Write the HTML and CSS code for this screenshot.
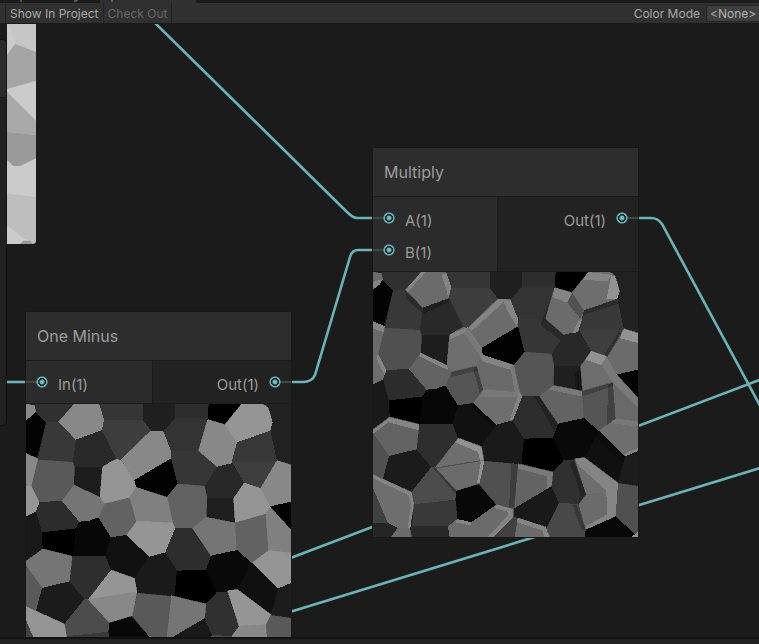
FILE: index.html
```html
<!DOCTYPE html>
<html lang="en">
<head>
<meta charset="utf-8">
<title>Shader Graph</title>
<link rel="stylesheet" href="styles.css">
</head>
<body>
<div class="tabs" aria-hidden="true">
  <span class="tab"><svg class="marks" viewBox="0 0 100 3"><path d="M21 0V2M74 1H77V0"/></svg></span>
  <span class="tab tab-active"><svg class="marks" viewBox="0 0 100 3"><path d="M12 0V2"/></svg></span>
</div>
<header class="toolbar">
  <button class="tool" type="button">Show In Project</button>
  <button class="tool" type="button" disabled>Check Out</button>
  <label class="mode-label" for="mode">Color Mode</label>
  <select class="mode" id="mode"><option>&lt;None&gt;</option></select>
</header>
<main class="canvas">
  <svg class="wires" aria-hidden="true">
    <g transform="translate(0 -24)">
      <path d="M152 20 347 212Q353 218 357 218H373"/>
      <path d="M291 382H303Q312 382 315 375L350 257Q352 250 358 250H373"/>
      <path d="M637 218H651Q658 218 662 224L764 413"/>
      <path d="M6 382H27"/>
      <path d="M280 562 770 376"/>
      <path d="M280 615 770 465"/>
    </g>
  </svg>

  <svg class="fragment" viewBox="21 12 87 660" aria-hidden="true">
    <path fill="#cbcbcb" d="M21 12H108V672H21Z"/>
    <path fill="#c6c6c6" d="M28 12H108V95L45 72Z"/>
    <path fill="#a5a5a5" d="M45 72 108 95V182L21 207V105Z"/>
    <path fill="#a9a9a9" d="M21 215 108 302V345L21 335Z"/>
    <path fill="#9a9a9a" d="M21 335 108 345V415L60 438 40 438 21 420Z"/>
    <path fill="#bebebe" d="M21 520 108 532V672L70 655 21 615Z"/>
    <path fill="#999" d="M60 672 70 662H90L100 672Z"/>
  </svg>
  <aside class="panel"><div class="panel-head"></div></aside>

  <section class="node one-minus">
    <h2 class="title">One Minus</h2>
    <div class="ports">
      <div class="inputs"><div class="port"><i class="pin"></i><span>In(1)</span></div></div>
      <div class="outputs"><div class="port"><span>Out(1)</span><i class="pin"></i></div></div>
    </div>
    <svg class="preview" viewBox="0 0 795 795" role="img" aria-label="Preview"><use href="#cells"/></svg>
  </section>

  <section class="node multiply">
    <h2 class="title">Multiply</h2>
    <div class="ports">
      <div class="inputs">
        <div class="port"><i class="pin"></i><span>A(1)</span></div>
        <div class="port"><i class="pin"></i><span>B(1)</span></div>
      </div>
      <div class="outputs"><div class="port"><span>Out(1)</span><i class="pin"></i></div></div>
    </div>
    <svg class="preview" viewBox="0 0 795 795" role="img" aria-label="Preview">
      <defs>
        <g id="cells">
          <path fill="#1e1e1e" d="M0 0H795V795H0Z"/>
          <path class="b" d="M0 0 26 5 29 25 3 50 0 50Z"/>
          <path fill="#303030" d="M28 0 145 0 98 53 60 55 29 26Z"/>
          <path fill="#383838" d="M60 55 98 53 150 107 140 175 35 168Z"/>
          <path fill="#030303" d="M29 25 60 55 33 160 0 150 0 50Z"/>
          <path class="b" d="M145 0 220 0 234 45 228 78 150 107 98 53Z"/>
          <path fill="#353535" d="M220 0H350V48H234Z"/>
          <path fill="#3d3d3d" d="M234 47H350L375 80 285 170 272 167 228 78Z"/>
          <path fill="#292929" d="M228 78 272 165 230 190 145 190 140 175 150 107Z"/>
          <path fill="#1d1d1d" d="M145 189H230L222 280 143 243Z"/>
          <path class="a" d="M230 188 272 165 285 170 325 228 330 250 310 282 235 300 222 280Z"/>
          <path class="b" d="M285 167 375 80 412 82 435 135 435 163 325 228Z"/>
          <path fill="#020202" d="M325 228 435 163 455 240 423 280 400 275 330 250Z"/>
          <path fill="#1f1f1f" d="M350 0H448V43L412 82 375 80 350 47Z"/>
          <path fill="#2d2d2d" d="M448 0H548L545 43H448Z"/>
          <path fill="#333" d="M448 43H545L518 141H435L412 82Z"/>
          <path fill="#363636" d="M435 140H518L573 188 535 248 455 240 435 163Z"/>
          <path fill="#000" d="M548 0H647L597 62 545 47Z"/>
          <path class="b" d="M545 47 597 62 633 115 617 178 573 188 518 140Z"/>
          <path class="a" d="M647 0H710L725 10 740 55 733 80 633 115 597 62Z"/>
          <path fill="#212121" d="M725 0H795V185L750 168 733 80 740 55Z"/>
          <path fill="#383838" d="M633 115 733 80 753 173H617Z"/>
          <path fill="#3e3e3e" d="M617 173H753L703 257 655 237Z"/>
          <path class="b" d="M753 170 795 183V295L733 309 703 255Z"/>
          <path fill="#282828" d="M573 188 617 178 655 237 623 284H543L535 247Z"/>
          <path fill="#1f1f1f" d="M543 283H623L628 357 540 340Z"/>
          <path class="a" d="M655 237 703 253 733 310 720 330 628 357 623 283Z"/>
          <path fill="#020202" d="M733 307 795 293V378Z"/>
          <path class="d" d="M455 240 535 247 543 283 540 340 500 373H447L435 345 423 280Z"/>
          <path class="c2" d="M310 282 330 250 423 280 440 357 330 354Z"/>
          <path class="a" d="M330 352 440 357 447 373 418 445 370 458 300 393Z"/>
          <path class="d" d="M235 300 310 282 330 353 300 393 255 400 217 340Z"/>
          <path class="c" d="M143 243 222 280 235 300 217 340 190 350 160 353 107 290Z"/>
          <path class="e" d="M35 168 140 175 145 190 143 243 107 290 40 295 15 247Z"/>
          <path class="b" d="M0 148 35 165 15 247H0Z"/>
          <path class="a" d="M0 247H15L40 295 30 323 0 337Z"/>
          <path fill="#191919" d="M0 337 30 323 48 383V436L0 480Z"/>
          <path fill="#2c2c2c" d="M40 295 107 290 160 353 150 375 48 385 30 323Z"/>
          <path fill="#000" d="M48 385 150 373 140 457 50 435Z"/>
          <path fill="#070707" d="M160 353 190 350 217 340 255 400 238 457H140L150 373Z"/>
          <path fill="#111" d="M255 400 300 393 370 458 325 523 255 498 238 457Z"/>
          <path fill="#1a1a1a" d="M370 458 418 445 453 500 445 578 335 568 325 523Z"/>
          <path fill="#2d2d2d" d="M447 373H500L555 455 540 497 453 500 418 445Z"/>
          <path class="c" d="M540 340 628 357 633 438 555 455 500 373Z"/>
          <path class="d" d="M628 357 720 330 728 440 678 477 633 438Z"/>
          <path class="c2" d="M720 330 733 310 795 378V448L728 440Z"/>
          <path class="a" d="M678 477 728 440 795 447V537L757 553Z"/>
          <path fill="#090909" d="M555 455 633 438 678 477 635 557 605 565H572L540 497Z"/>
          <path fill="#101010" d="M678 477 757 553 735 632 635 557Z"/>
          <path fill="#1c1c1c" d="M757 553 795 537V643L735 634Z"/>
          <path fill="#000" d="M453 500 540 497 572 565 540 602 445 577Z"/>
          <path fill="#303030" d="M572 565H605L640 668 617 698 558 695 535 643 540 600Z"/>
          <path class="a" d="M605 560 635 557 735 632 720 664 640 668Z"/>
          <path class="b" d="M640 667 720 662 728 733 638 773 615 700Z"/>
          <path class="e" d="M735 634 795 643V795L728 733 720 662Z"/>
          <path fill="#080808" d="M728 733 795 795H635L638 773Z"/>
          <path class="c" d="M435 575 540 600 535 643 420 711Z"/>
          <path class="e" d="M335 568 435 577 420 713 370 698 318 635Z"/>
          <path fill="#191919" d="M535 643 558 693 520 768 435 738 420 711Z"/>
          <path fill="#484848" d="M558 693 617 696 638 773 635 795H530L520 768Z"/>
          <path class="b" d="M435 738 518 765 530 795H425Z"/>
          <path class="b" d="M370 698 420 711V735L360 795H310L295 751Z"/>
          <path fill="#414141" d="M420 733 435 738 425 795H360Z"/>
          <path class="b" d="M253 741 295 751 310 795H230L225 763Z"/>
          <path fill="#080808" d="M248 658 315 636 370 698 295 751 253 741Z"/>
          <path fill="#393939" d="M120 695 247 683 253 741 225 763H118Z"/>
          <path fill="#282828" d="M112 763H225L230 795H115Z"/>
          <path fill="#4c4c4c" d="M175 585H187L250 655 247 683 120 697 115 660Z"/>
          <path class="a" d="M255 498 325 523 333 565 187 587Z"/>
          <path class="b" d="M187 587 333 563 318 635 250 655Z"/>
          <path fill="#2e2e2e" d="M140 455H238L255 498 187 585H175L130 532Z"/>
          <path class="c" d="M50 435 138 457 130 532 48 552 0 490V472Z"/>
          <path class="e" d="M0 485 48 552 30 622 0 610Z"/>
          <path fill="#1b1b1b" d="M48 552 130 532 175 585 115 660 30 620Z"/>
          <path class="a" d="M0 608 115 660 122 700 110 768H75L45 753 0 648Z"/>
          <path fill="#414141" d="M0 648 45 753H0Z"/>
          <path fill="#252525" d="M0 753H45L75 768 55 795H0Z"/>
          <path class="b" d="M75 768H110L115 795H55Z"/>
        </g>
      </defs>
      <use href="#cells"/>
      <g class="lit">
        <path d="M0 30 29 22 20 38 3 50 0 50Z"/>
        <path d="M98 53 145 0 158 0 104 60Z"/>
        <path d="M205 8 222 6 235 48 225 78 222 58Z"/>
        <path d="M0 148 35 162 33 180 0 170Z"/>
        <path d="M15 247 40 295 35 310 10 258Z"/>
        <path d="M143 243 222 280 226 295 137 252Z"/>
        <path d="M230 188 285 165 282 180 230 202Z"/>
        <path class="soft" d="M285 167 328 230 322 252 272 182Z"/>
        <path d="M375 82 400 82 388 94 295 178 287 168Z"/>
        <path d="M390 82 412 84 435 140 432 165 400 110Z"/>
        <path d="M320 245 423 280 425 297 328 268Z"/>
        <path class="soft" d="M423 280 438 363 426 363 412 285Z"/>
        <path class="soft" d="M330 353 440 361 440 375 322 374Z"/>
        <path d="M438 361 448 373 420 444 410 444 434 376Z"/>
        <path d="M545 47 597 62 583 92 538 75Z"/>
        <path d="M618 145 628 140 615 180 598 184Z"/>
        <path d="M645 0 715 8 703 28 630 23Z"/>
        <path class="bright" d="M715 10 726 13 740 58 733 80 700 82Z"/>
        <path class="bright" d="M753 171 795 184V213L740 198Z"/>
        <path class="bright" d="M654 238 703 253 690 280 638 263Z"/>
        <path class="soft" d="M700 254 733 311 720 331 685 278Z"/>
        <path class="soft" d="M540 341 628 358V374L528 353Z"/>
        <path class="soft" d="M720 332 733 312 795 378V405Z"/>
        <path class="soft" d="M728 440 795 449V464L712 453Z"/>
        <path d="M755 553 795 537V528L757 543Z"/>
        <path d="M50 436 139 458 137 475 46 451 0 485V475Z"/>
        <path class="bright" d="M255 498 325 525 333 573 320 633H312L323 573 315 540 249 512Z"/>
        <path d="M0 608 115 661 122 693 112 768H104L115 693 107 670 0 618Z"/>
        <path d="M253 741 295 751V761L247 751Z"/>
        <path d="M370 698 420 711V735L360 795H345L405 730 404 719 364 708Z"/>
        <path d="M607 561 635 558 735 634 728 733 638 773V763L702 728 700 655 615 580Z"/>
        <path class="soft" d="M437 577 540 601 535 643 520 650 523 613 435 590Z"/>
        <path d="M435 738 518 765 530 795H515L508 775 430 750Z"/>
        <path class="bright" d="M775 795 795 780V795Z"/>
      </g>
      <g class="shade">
        <path d="M98 60 150 108 228 80 226 92 150 125 98 80Z"/>
        <path d="M235 300 310 283 316 296 235 315Z"/>
        <path d="M310 283 330 352 320 364 302 295Z"/>
        <path d="M597 62 633 115 622 140 583 92Z"/>
        <path d="M525 95 518 142 572 190 565 206 502 160Z"/>
        <path d="M633 115 733 82 736 95 629 130Z"/>
        <path d="M745 190 703 255 693 251 740 175Z"/>
        <path d="M605 308 623 286 630 358 608 353Z"/>
        <path d="M628 358 720 332V343L628 373Z"/>
        <path d="M705 338 720 332 728 440 702 460Z"/>
        <path d="M500 373 555 455 545 480 484 373Z"/>
        <path d="M633 438 757 553 750 575 630 455Z"/>
        <path d="M300 393 370 458 362 470 285 395Z"/>
        <path d="M602 567 640 668 615 698 622 665 590 570Z"/>
        <path d="M415 576 435 577 425 705 408 709Z"/>
        <path d="M187 587 332 563V566L190 590Z"/>
        <path d="M187 587 250 655 247 666 182 590Z"/>
        <path d="M612 700 638 773 627 775 598 698Z"/>
      </g>
    </svg>
  </section>
</main>
<footer class="status"></footer>
</body>
</html>
```
FILE: styles.css
```css
* { box-sizing: border-box; }

body {
  margin: 0;
  height: 100vh;
  display: flex;
  flex-direction: column;
  overflow: hidden;
  background: #1b1b1b;
  color: #9c9c9c;
  font-family: Inter, "Liberation Sans", sans-serif;
}

.tabs {
  flex: none;
  display: flex;
  height: 3px;
  background: #1c1c1c;
}
.tab { width: 100px; }
.tab-active { width: 96px; background: #303030; }
.marks {
  display: block;
  width: 100px;
  height: 3px;
  fill: none;
  stroke: #8a8a8a;
}

.toolbar {
  flex: none;
  display: flex;
  align-items: stretch;
  height: 21px;
  padding-left: 5px;
  background: #303030;
  border-bottom: 1px solid #191919;
  font-size: 12px;
}
.tool {
  margin: 0;
  padding: 0 4px;
  border: 0;
  border-left: 1px solid #232323;
  background: none;
  color: #a8a8a8;
  font: inherit;
}
.tool:disabled {
  border-right: 1px solid #232323;
  color: #656565;
}
.mode-label {
  margin-left: auto;
  align-self: center;
  padding-right: 6px;
  color: #a8a8a8;
}
.mode {
  appearance: none;
  width: 55px;
  margin: 2px -2px 1px 0;
  padding: 0 3px;
  border: 1px solid #262626;
  border-radius: 3px;
  background: #3f3f3f;
  color: #b0b0b0;
  font: inherit;
}

.canvas {
  position: relative;
  flex: 1;
  min-height: 0;
  overflow: hidden;
}
.wires {
  position: absolute;
  inset: 0;
  width: 100%;
  height: 100%;
}
.wires path {
  fill: none;
  stroke: #68b5b8;
  stroke-width: 2.6;
}

.fragment {
  position: absolute;
  left: 7px;
  top: 0;
  width: 29px;
  height: 220px;
  border-bottom-right-radius: 4px;
}
.panel {
  position: absolute;
  left: -20px;
  top: 15px;
  width: 27px;
  height: 387px;
  overflow: hidden;
  border: 1px solid #121212;
  border-radius: 5px;
  background: #212121;
}
.panel-head {
  height: 58px;
  background: #2c2c2c;
  border-bottom: 1px solid #191919;
}

.node {
  position: absolute;
  width: 265px;
  background: #1b1b1b;
  box-shadow: 0 0 0 1px #181818;
}
.one-minus {
  left: 26px;
  top: 288px;
  --a: #959595;
  --b: #888;
  --c: #757575;
  --c2: #808080;
  --d: #626262;
  --e: #595959;
}
.multiply {
  left: 373px;
  top: 124px;
  --a: #6e6e6e;
  --b: #6b6b6b;
  --c: #636363;
  --c2: #696969;
  --d: #555;
  --e: #505050;
}

.title {
  margin: 0 0 1px;
  padding: 0 11px;
  background: #2d2d2d;
  font-size: 16px;
  font-weight: 400;
  line-height: 48px;
}
.ports {
  display: flex;
  gap: 1px;
  margin-bottom: 1px;
  font-size: 15px;
}
.inputs, .outputs { padding: 5px 0; }
.inputs { flex: 124; background: #2b2b2b; }
.outputs { flex: 140; background: #222; }
.one-minus .inputs { flex-grow: 126; }
.one-minus .outputs { flex-grow: 138; }
.port {
  display: flex;
  align-items: center;
  height: 32px;
}
.outputs .port { justify-content: flex-end; }
.port span { padding-top: 5px; }
.pin {
  flex: none;
  width: 32px;
  height: 12px;
  background:
    radial-gradient(circle at 16px 6px, #6bb9bc 2px, #1c2424 3px, #1c2424 4px, #6bb9bc 4px, #6bb9bc 5px, transparent 6px),
    linear-gradient(#3b4b4c, #3b4b4c) 0 5px / 11px 2px no-repeat;
}
.outputs .pin { background-position: 0 0, 21px 5px; }

.preview {
  display: block;
  width: 100%;
  shape-rendering: crispEdges;
}
.a { fill: var(--a); stroke: var(--a); }
.b { fill: var(--b); stroke: var(--b); }
.c { fill: var(--c); stroke: var(--c); }
.c2 { fill: var(--c2); stroke: var(--c2); }
.d { fill: var(--d); stroke: var(--d); }
.e { fill: var(--e); stroke: var(--e); }
.a, .b, .c, .c2, .d, .e { stroke-width: 2; }
.lit { fill: #848484; }
.soft { fill: #797979; }
.bright { fill: #929292; }
.shade { fill: #000; fill-opacity: .23; }

.status {
  flex: none;
  height: 7px;
  border-top: 2px solid #131313;
  background: #212121;
}
```
